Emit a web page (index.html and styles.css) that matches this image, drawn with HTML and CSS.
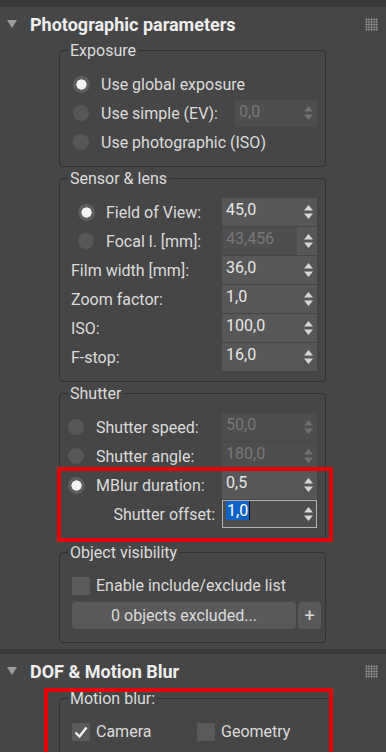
FILE: index.html
```html
<!DOCTYPE html>
<html>
<head>
    <title>Photographic parameters</title>
    <link rel="stylesheet" href="styles.css">
</head>
<body>
    <svg width="0" height="0" class="defs">
        <symbol id="updown" viewBox="0 0 9 14">
            <path d="M0 5.5 L4.5 0 L9 5.5 Z M0 8.5 L4.5 14 L9 8.5 Z"/>
        </symbol>
    </svg>

    <div class="screen">
        <div class="topbar"></div>

        <section class="rollout">
            <div class="rollout-head">
                <span class="twisty"></span>
                <h2>Photographic parameters</h2>
                <span class="grip"></span>
            </div>

            <fieldset class="group exposure">
                <legend>Exposure</legend>
                <div class="row">
                    <span class="radio on"></span>
                    <span class="label">Use global exposure</span>
                </div>
                <div class="row">
                    <span class="radio"></span>
                    <span class="label">Use simple (EV):</span>
                    <div class="spin off narrow"><span class="val">0,0</span><svg class="arrows"><use href="#updown"/></svg></div>
                </div>
                <div class="row">
                    <span class="radio"></span>
                    <span class="label">Use photographic (ISO)</span>
                </div>
            </fieldset>

            <fieldset class="group sensor">
                <legend>Sensor &amp; lens</legend>
                <div class="row indent">
                    <span class="radio on"></span>
                    <span class="label">Field of View:</span>
                    <div class="spin"><span class="val">45,0</span><svg class="arrows"><use href="#updown"/></svg></div>
                </div>
                <div class="row indent">
                    <span class="radio"></span>
                    <span class="label">Focal l. [mm]:</span>
                    <div class="spin off-val"><span class="val">43,456</span><svg class="arrows"><use href="#updown"/></svg></div>
                </div>
                <div class="row">
                    <span class="label">Film width [mm]:</span>
                    <div class="spin"><span class="val">36,0</span><svg class="arrows"><use href="#updown"/></svg></div>
                </div>
                <div class="row">
                    <span class="label">Zoom factor:</span>
                    <div class="spin"><span class="val">1,0</span><svg class="arrows"><use href="#updown"/></svg></div>
                </div>
                <div class="row">
                    <span class="label">ISO:</span>
                    <div class="spin"><span class="val">100,0</span><svg class="arrows"><use href="#updown"/></svg></div>
                </div>
                <div class="row">
                    <span class="label">F-stop:</span>
                    <div class="spin"><span class="val">16,0</span><svg class="arrows"><use href="#updown"/></svg></div>
                </div>
            </fieldset>

            <fieldset class="group shutter">
                <legend>Shutter</legend>
                <div class="row">
                    <span class="radio"></span>
                    <span class="label">Shutter speed:</span>
                    <div class="spin off"><span class="val">50,0</span><svg class="arrows"><use href="#updown"/></svg></div>
                </div>
                <div class="row">
                    <span class="radio"></span>
                    <span class="label">Shutter angle:</span>
                    <div class="spin off"><span class="val">180,0</span><svg class="arrows"><use href="#updown"/></svg></div>
                </div>
                <div class="marked">
                    <div class="row">
                        <span class="radio on"></span>
                        <span class="label">MBlur duration:</span>
                        <div class="spin"><span class="val">0,5</span><svg class="arrows"><use href="#updown"/></svg></div>
                    </div>
                    <div class="row">
                        <span class="label right">Shutter offset:</span>
                        <div class="spin focus"><span class="val"><span class="sel">1,0</span><span class="caret"></span></span><svg class="arrows"><use href="#updown"/></svg></div>
                    </div>
                </div>
            </fieldset>

            <fieldset class="group visibility">
                <legend>Object visibility</legend>
                <div class="row check-row">
                    <span class="check"></span>
                    <span class="label">Enable include/exclude list</span>
                </div>
                <div class="button-row">
                    <button class="wide">0 objects excluded...</button>
                    <button class="plus">+</button>
                </div>
            </fieldset>
        </section>

        <div class="separator"></div>

        <section class="rollout last">
            <div class="rollout-head">
                <span class="twisty"></span>
                <h2>DOF &amp; Motion Blur</h2>
                <span class="grip"></span>
            </div>

            <div class="marked-box">
                <fieldset class="group motion">
                    <legend>Motion blur:</legend>
                    <div class="row check-row">
                        <span class="check-item">
                            <span class="check on"><svg viewBox="0 0 18 18"><path d="M3.5 9.5 L7.5 13.5 L14.5 4.5" /></svg></span>
                            <span class="label">Camera</span>
                        </span>
                        <span class="check-item">
                            <span class="check"></span>
                            <span class="label">Geometry</span>
                        </span>
                    </div>
                </fieldset>
            </div>
        </section>
    </div>
</body>
</html>
```

FILE: styles.css
```css
* {
    margin: 0;
    padding: 0;
    box-sizing: border-box;
}

body {
    background-color: #464646;
    font-family: Roboto, "Liberation Sans", sans-serif;
    font-size: 16px;
    color: #dcdcdc;
}

.screen {
    width: 386px;
    height: 752px;
    overflow: hidden;
}

.defs {
    position: absolute;
}

.topbar {
    height: 7px;
    background-color: #383838;
}

.separator {
    height: 5px;
    background-color: #383838;
}

.rollout {
    background-color: #464646;
    padding-bottom: 6px;
}

.rollout.last {
    padding-bottom: 0;
}

.rollout-head {
    height: 34px;
    display: flex;
    align-items: center;
    padding: 0 8px 0 7px;
}

.twisty {
    width: 0;
    height: 0;
    border-left: 5px solid transparent;
    border-right: 5px solid transparent;
    border-top: 8px solid #9c9c9c;
    margin-right: 13px;
}

.rollout-head h2 {
    flex: 1;
    font-size: 18px;
    font-weight: bold;
    color: #efefef;
}

.grip {
    width: 13px;
    height: 13px;
    background-image: radial-gradient(circle, #a0a0a0 0.7px, transparent 1.1px);
    background-size: 2.6px 2.6px;
}

/* Group boxes */
.group {
    margin: 0 60px 2px 59px;
    border: 1px solid #313131;
    border-radius: 4px;
    padding: 10px 8px 10px 8px;
    display: flex;
    flex-direction: column;
    gap: 1px;
}

legend {
    padding: 0 2px;
    line-height: 19px;
}

.row {
    height: 28px;
    display: flex;
    align-items: center;
}

.exposure .row {
    padding-left: 5px;
}

.sensor .row {
    padding-left: 3px;
}

.sensor .row.indent {
    padding-left: 10px;
}

.shutter {
    padding-bottom: 12px;
}

.label {
    white-space: nowrap;
}

.label.right {
    width: 147px;
    margin-right: 7px;
    text-align: right;
}

.radio {
    flex: none;
    width: 16px;
    height: 16px;
    margin-right: 12px;
    border-radius: 50%;
    background-color: #575757;
}

.radio.on {
    width: 17px;
    height: 17px;
    margin-right: 11px;
    background: radial-gradient(circle, #f4f4f4 0 4.8px, #5e5e5e 5.4px);
}

/* Spinners */
.spin {
    margin-left: auto;
    width: 95px;
    height: 28px;
    display: flex;
    justify-content: space-between;
    align-items: center;
    background-color: #575757;
    color: #e6e6e6;
    padding: 0 4px;
}

.spin.narrow {
    width: 82px;
    height: 27px;
}

.val {
    align-self: flex-start;
    line-height: 23px;
    display: flex;
    align-items: center;
}

.arrows {
    width: 9px;
    height: 14px;
    fill: #d6d6d6;
}

.spin.off {
    background-color: #4e4e4e;
    color: #777;
}

.spin.off .arrows {
    fill: #707070;
}

.spin.off-val {
    background: linear-gradient(to right, #4e4e4e 75px, #575757 75px);
}

.spin.off-val .val {
    color: #777;
}

.spin.focus {
    margin-left: 0;
    border: 1px solid #b2b2b2;
    background-color: #4e4e4e;
    padding: 0 3px;
}

.sel {
    background-color: #0f62c6;
    color: #fff;
    line-height: 19px;
    padding: 0 1px;
}

.caret {
    width: 1px;
    height: 19px;
    background-color: #111;
}

/* Red annotation boxes */
.marked {
    position: relative;
    display: flex;
    flex-direction: column;
    gap: 1px;
}

.marked::after,
.marked-box::after {
    content: "";
    position: absolute;
    border: 4px solid #e2050a;
    pointer-events: none;
}

.marked::after {
    top: -4px;
    left: -11px;
    right: -16px;
    bottom: -14px;
}

.marked-box {
    position: relative;
}

.marked-box::after {
    top: -1px;
    left: 44px;
    right: 53px;
    bottom: -30px;
}

/* Checkboxes and buttons */
.visibility {
    margin-bottom: 0;
    padding-bottom: 13px;
}

.check-row {
    padding-left: 4px;
    height: 27px;
}

.check {
    flex: none;
    width: 18px;
    height: 18px;
    margin-right: 6px;
    background-color: #5a5a5a;
    border-radius: 1px;
}

.check svg {
    width: 18px;
    height: 18px;
    fill: none;
    stroke: #f4f4f4;
    stroke-width: 2.4;
}

.check-item {
    display: flex;
    align-items: center;
    width: 125px;
}

.button-row {
    display: flex;
    gap: 2px;
    margin: 2px -4px 0 4px;
}

button {
    height: 27px;
    border: none;
    border-radius: 4px;
    background-color: #595959;
    color: #dcdcdc;
    font-family: Roboto, "Liberation Sans", sans-serif;
    font-size: 16px;
}

button.wide {
    flex: 1;
}

button.plus {
    width: 23px;
    font-size: 18px;
}

.motion {
    margin-top: 1px;
    padding-top: 9px;
    padding-bottom: 20px;
}

.motion .check-row {
    height: 29px;
}
```
